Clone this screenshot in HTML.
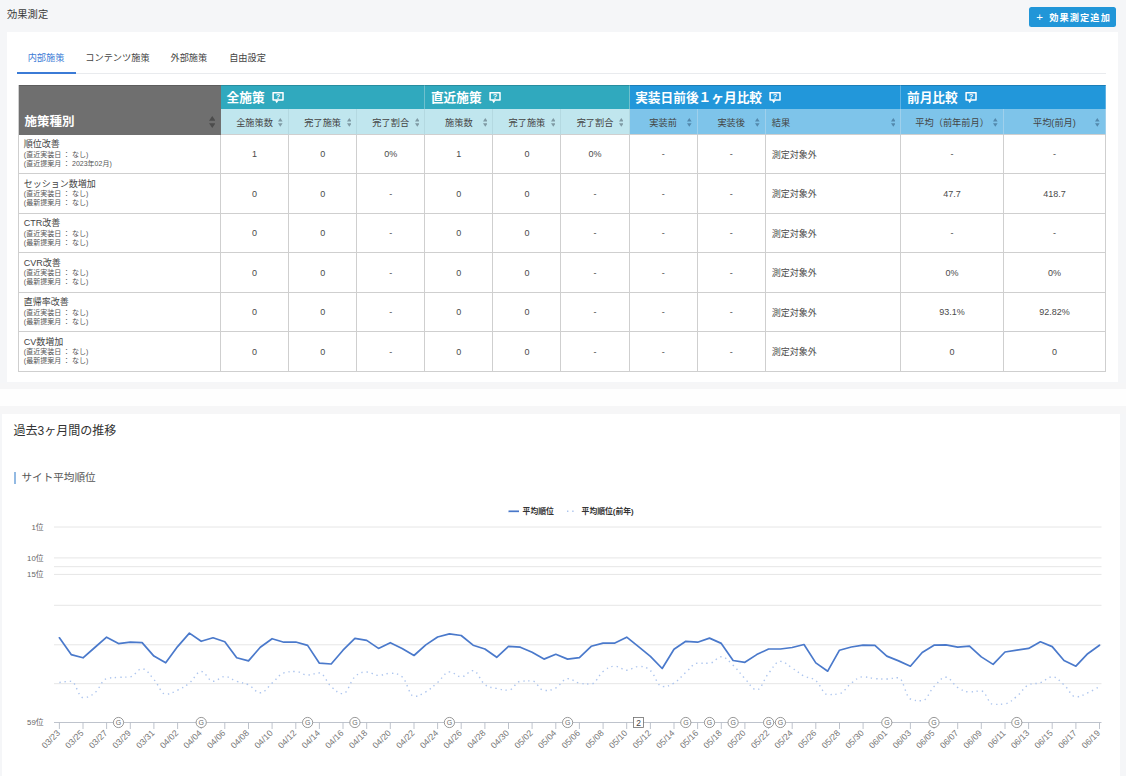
<!DOCTYPE html>
<html lang="ja"><head><meta charset="utf-8"><title>効果測定</title>
<style>
html,body{margin:0;padding:0}
body{width:1126px;height:776px;overflow:hidden;position:relative;background:#f5f6f8;font-family:"Liberation Sans","Noto Sans CJK JP",sans-serif;color:#444;font-size:9.2px}
.abs{position:absolute}
.title{left:7px;top:7.5px;font-size:10.3px;color:#3a3a3a;line-height:14px}
.btn{left:1029px;top:7px;width:87px;height:19.5px;background:#2196d8;border-radius:2.5px;color:#fff;font-size:9.2px;font-weight:700;line-height:20.2px;letter-spacing:1.1px;text-align:left;box-sizing:border-box;padding-left:7.3px;white-space:nowrap;overflow:hidden}
.btn .plus{font-size:11.5px;letter-spacing:0;margin-right:6.2px;font-weight:normal;vertical-align:0.2px}
.card1{left:6.6px;top:31.8px;width:1111.4px;height:350.6px;background:#fff}
.band1{left:0;top:382.5px;width:1126px;height:6.5px;background:#f6f6f7}
.band2{left:0;top:389px;width:1126px;height:16.5px;background:#fefefe}
.band3{left:0;top:405.5px;width:1126px;height:8.5px;background:#f6f6f7}
.card2{left:2.4px;top:413.6px;width:1117.4px;height:362px;background:#fff}
.tabs{left:16.5px;top:42px;width:1089px;height:30.5px;border-bottom:1px solid #e9ebee}
.tab{position:absolute;top:0;height:30.5px;line-height:33px;font-size:9.2px;color:#444;white-space:nowrap}
.tab.on{color:#3b7bd6;border-bottom:2px solid #3b7bd6;height:29.5px}
table{position:absolute;left:17.5px;top:84.6px;border-collapse:separate;border-spacing:0;table-layout:fixed;width:1088.5px;border-left:1px solid #cfcfcf}
td,th{box-sizing:border-box;border-right:1px solid #cfcfcf;border-bottom:1px solid #cfcfcf;padding:0;text-align:center;font-weight:normal;position:relative;font-size:9px;color:#4a4a4a;overflow:hidden}
th.g{background:#6f6f6f;color:#fff;font-size:12.5px;line-height:15px;font-weight:bold;text-align:left;vertical-align:bottom;padding:0 0 3.6px 6px;border-color:#6f6f6f}
th.h1,th.h2{height:24.2px;color:#fff;font-size:12.7px;font-weight:bold;text-align:left;padding:2.6px 0 0 5.6px;line-height:20.6px;border-bottom:0}
th.h1,th.h2,th.g{border-top:1px solid rgba(0,0,0,.16)}
th.h1{background:#30a9be;border-right-color:#6fc0ce}
th.h2{background:#2297da;border-right-color:#5fb2e3}
th.s1,th.s2{height:26.1px;color:#444;font-size:9.2px;line-height:18.3px;padding-top:4.6px}
th.s1{background:#c0e6ee;border-right-color:#b4d9e1}
th.s2{background:#7ec4ea;border-right-color:#9fd0ec}
th.l,td.l{text-align:left;padding-left:6px}
tbody td{height:39.5px}
td.n{text-align:left;padding:0 0 0.4px 5.3px;vertical-align:middle}
.nm{font-size:9px;line-height:11.3px;color:#444}
.sm{font-size:7px;line-height:8.9px;color:#555;white-space:nowrap}
.help{display:inline-block;vertical-align:-1.7px;margin-left:7.3px}
.sort{position:absolute;right:5.1px;top:9.6px;fill:#7f9aa4;width:4.6px;height:8.8px}
th.g .sort{top:auto;bottom:5.4px;right:5px;fill:#4c4c4c;width:6.5px;height:12px}
th.s2 .sort{fill:#5389ad}
.h2t{left:13.5px;top:421.5px;font-size:12px;line-height:18px;color:#333}
.h3t{left:13.5px;top:472px;height:11.5px;border-left:2.3px solid #93bae3;padding-left:6px;font-size:10.6px;line-height:11.5px;color:#555}
.chart{position:absolute;left:0;top:0}
</style></head><body>
<div class="abs title">効果測定</div>
<div class="abs btn"><span class="plus">+</span>効果測定追加</div>
<div class="abs card1"></div>
<div class="abs band1"></div><div class="abs band2"></div><div class="abs band3"></div>
<div class="abs card2"></div>
<div class="abs tabs">
<div class="tab on" style="left:0;width:59px;text-align:center">内部施策</div>
<div class="tab" style="left:68.8px">コンテンツ施策</div>
<div class="tab" style="left:154px">外部施策</div>
<div class="tab" style="left:212.7px">自由設定</div>
</div>
<table>
<colgroup><col style="width:202.5px"><col style="width:68.1px"><col style="width:68.1px"><col style="width:68.1px"><col style="width:68.1px"><col style="width:68.1px"><col style="width:68.1px"><col style="width:68.1px"><col style="width:68.1px"><col style="width:135.6px"><col style="width:102.5px"><col style="width:102.1px"></colgroup>
<thead>
<tr><th class="g" rowspan="2">施策種別<svg class="sort" viewBox="0 0 5 9" preserveAspectRatio="none"><path d="M2.5 0L5 3.6H0z M2.5 9L5 5.400H0z"/></svg></th><th class="h1" colspan="3">全施策<svg class="help" width="12" height="12" viewBox="0 0 12 12"><path d="M1.1 0.7H11V7.9H1.1z" fill="none" stroke="#fff" stroke-width="1.5" stroke-linejoin="round"/><path d="M2.9 8.3H6.600L4.700 11.300z" fill="#fff"/><text x="6.05" y="6.750" font-family="'Liberation Sans', sans-serif" font-size="7.400" font-weight="bold" fill="#fff" text-anchor="middle">?</text></svg></th><th class="h1" colspan="3">直近施策<svg class="help" width="12" height="12" viewBox="0 0 12 12"><path d="M1.1 0.7H11V7.9H1.1z" fill="none" stroke="#fff" stroke-width="1.5" stroke-linejoin="round"/><path d="M2.9 8.3H6.600L4.700 11.300z" fill="#fff"/><text x="6.05" y="6.750" font-family="'Liberation Sans', sans-serif" font-size="7.400" font-weight="bold" fill="#fff" text-anchor="middle">?</text></svg></th><th class="h2" colspan="3">実装日前後１ヶ月比較<svg class="help" width="12" height="12" viewBox="0 0 12 12"><path d="M1.1 0.7H11V7.9H1.1z" fill="none" stroke="#fff" stroke-width="1.5" stroke-linejoin="round"/><path d="M2.9 8.3H6.600L4.700 11.300z" fill="#fff"/><text x="6.05" y="6.750" font-family="'Liberation Sans', sans-serif" font-size="7.400" font-weight="bold" fill="#fff" text-anchor="middle">?</text></svg></th><th class="h2" colspan="2">前月比較<svg class="help" width="12" height="12" viewBox="0 0 12 12"><path d="M1.1 0.7H11V7.9H1.1z" fill="none" stroke="#fff" stroke-width="1.5" stroke-linejoin="round"/><path d="M2.9 8.3H6.600L4.700 11.300z" fill="#fff"/><text x="6.05" y="6.750" font-family="'Liberation Sans', sans-serif" font-size="7.400" font-weight="bold" fill="#fff" text-anchor="middle">?</text></svg></th></tr>
<tr><th class="s1">全施策数<svg class="sort" viewBox="0 0 5 9" preserveAspectRatio="none"><path d="M2.5 0L5 3.6H0z M2.5 9L5 5.400H0z"/></svg></th><th class="s1">完了施策<svg class="sort" viewBox="0 0 5 9" preserveAspectRatio="none"><path d="M2.5 0L5 3.6H0z M2.5 9L5 5.400H0z"/></svg></th><th class="s1">完了割合<svg class="sort" viewBox="0 0 5 9" preserveAspectRatio="none"><path d="M2.5 0L5 3.6H0z M2.5 9L5 5.400H0z"/></svg></th><th class="s1">施策数<svg class="sort" viewBox="0 0 5 9" preserveAspectRatio="none"><path d="M2.5 0L5 3.6H0z M2.5 9L5 5.400H0z"/></svg></th><th class="s1">完了施策<svg class="sort" viewBox="0 0 5 9" preserveAspectRatio="none"><path d="M2.5 0L5 3.6H0z M2.5 9L5 5.400H0z"/></svg></th><th class="s1">完了割合<svg class="sort" viewBox="0 0 5 9" preserveAspectRatio="none"><path d="M2.5 0L5 3.6H0z M2.5 9L5 5.400H0z"/></svg></th><th class="s2">実装前<svg class="sort" viewBox="0 0 5 9" preserveAspectRatio="none"><path d="M2.5 0L5 3.6H0z M2.5 9L5 5.400H0z"/></svg></th><th class="s2">実装後<svg class="sort" viewBox="0 0 5 9" preserveAspectRatio="none"><path d="M2.5 0L5 3.6H0z M2.5 9L5 5.400H0z"/></svg></th><th class="s2 l">結果<svg class="sort" viewBox="0 0 5 9" preserveAspectRatio="none"><path d="M2.5 0L5 3.6H0z M2.5 9L5 5.400H0z"/></svg></th><th class="s2">平均（前年前月）<svg class="sort" viewBox="0 0 5 9" preserveAspectRatio="none"><path d="M2.5 0L5 3.6H0z M2.5 9L5 5.400H0z"/></svg></th><th class="s2">平均(前月)<svg class="sort" viewBox="0 0 5 9" preserveAspectRatio="none"><path d="M2.5 0L5 3.6H0z M2.5 9L5 5.400H0z"/></svg></th></tr>
</thead>
<tbody>
<tr><td class="n"><div class="nm">順位改善</div><div class="sm">(直近実装日 ： なし)</div><div class="sm">(直近提案月 ： 2023年02月)</div></td><td>1</td><td>0</td><td>0%</td><td>1</td><td>0</td><td>0%</td><td>-</td><td>-</td><td class="l">測定対象外</td><td>-</td><td>-</td></tr>
<tr><td class="n"><div class="nm">セッション数増加</div><div class="sm">(直近実装日 ： なし)</div><div class="sm">(最新提案月 ： なし)</div></td><td>0</td><td>0</td><td>-</td><td>0</td><td>0</td><td>-</td><td>-</td><td>-</td><td class="l">測定対象外</td><td>47.7</td><td>418.7</td></tr>
<tr><td class="n"><div class="nm">CTR改善</div><div class="sm">(直近実装日 ： なし)</div><div class="sm">(最新提案月 ： なし)</div></td><td>0</td><td>0</td><td>-</td><td>0</td><td>0</td><td>-</td><td>-</td><td>-</td><td class="l">測定対象外</td><td>-</td><td>-</td></tr>
<tr><td class="n"><div class="nm">CVR改善</div><div class="sm">(直近実装日 ： なし)</div><div class="sm">(最新提案月 ： なし)</div></td><td>0</td><td>0</td><td>-</td><td>0</td><td>0</td><td>-</td><td>-</td><td>-</td><td class="l">測定対象外</td><td>0%</td><td>0%</td></tr>
<tr><td class="n"><div class="nm">直帰率改善</div><div class="sm">(直近実装日 ： なし)</div><div class="sm">(最新提案月 ： なし)</div></td><td>0</td><td>0</td><td>-</td><td>0</td><td>0</td><td>-</td><td>-</td><td>-</td><td class="l">測定対象外</td><td>93.1%</td><td>92.82%</td></tr>
<tr><td class="n"><div class="nm">CV数増加</div><div class="sm">(直近実装日 ： なし)</div><div class="sm">(最新提案月 ： なし)</div></td><td>0</td><td>0</td><td>-</td><td>0</td><td>0</td><td>-</td><td>-</td><td>-</td><td class="l">測定対象外</td><td>0</td><td>0</td></tr>
</tbody></table>
<div class="abs h2t">過去3ヶ月間の推移</div>
<div class="abs h3t">サイト平均順位</div>
<svg class="chart" width="1126" height="776" viewBox="0 0 1126 776">
<line x1="54" x2="1101.5" y1="527.0" y2="527.0" stroke="#e6e6e6" stroke-width="1"/>
<line x1="54" x2="1101.5" y1="557.9" y2="557.9" stroke="#e6e6e6" stroke-width="1"/>
<line x1="54" x2="1101.5" y1="566.7" y2="566.7" stroke="#e6e6e6" stroke-width="1"/>
<line x1="54" x2="1101.5" y1="574.4" y2="574.4" stroke="#e6e6e6" stroke-width="1"/>
<line x1="54" x2="1101.5" y1="605.3" y2="605.3" stroke="#e6e6e6" stroke-width="1"/>
<line x1="54" x2="1101.5" y1="644.8" y2="644.8" stroke="#e6e6e6" stroke-width="1"/>
<line x1="54" x2="1101.5" y1="683.7" y2="683.7" stroke="#e6e6e6" stroke-width="1"/>
<line x1="54" x2="1101.5" y1="722.5" y2="722.5" stroke="#b7bcc6" stroke-width="0.9"/>
<line x1="59.4" x2="59.4" y1="722.5" y2="729.0" stroke="#b7bcc6" stroke-width="0.9"/>
<line x1="83.0" x2="83.0" y1="722.5" y2="729.0" stroke="#b7bcc6" stroke-width="0.9"/>
<line x1="106.6" x2="106.6" y1="722.5" y2="729.0" stroke="#b7bcc6" stroke-width="0.9"/>
<line x1="130.3" x2="130.3" y1="722.5" y2="729.0" stroke="#b7bcc6" stroke-width="0.9"/>
<line x1="153.9" x2="153.9" y1="722.5" y2="729.0" stroke="#b7bcc6" stroke-width="0.9"/>
<line x1="177.6" x2="177.6" y1="722.5" y2="729.0" stroke="#b7bcc6" stroke-width="0.9"/>
<line x1="201.2" x2="201.2" y1="722.5" y2="729.0" stroke="#b7bcc6" stroke-width="0.9"/>
<line x1="224.8" x2="224.8" y1="722.5" y2="729.0" stroke="#b7bcc6" stroke-width="0.9"/>
<line x1="248.5" x2="248.5" y1="722.5" y2="729.0" stroke="#b7bcc6" stroke-width="0.9"/>
<line x1="272.1" x2="272.1" y1="722.5" y2="729.0" stroke="#b7bcc6" stroke-width="0.9"/>
<line x1="295.8" x2="295.8" y1="722.5" y2="729.0" stroke="#b7bcc6" stroke-width="0.9"/>
<line x1="319.4" x2="319.4" y1="722.5" y2="729.0" stroke="#b7bcc6" stroke-width="0.9"/>
<line x1="343.0" x2="343.0" y1="722.5" y2="729.0" stroke="#b7bcc6" stroke-width="0.9"/>
<line x1="366.7" x2="366.7" y1="722.5" y2="729.0" stroke="#b7bcc6" stroke-width="0.9"/>
<line x1="390.3" x2="390.3" y1="722.5" y2="729.0" stroke="#b7bcc6" stroke-width="0.9"/>
<line x1="414.0" x2="414.0" y1="722.5" y2="729.0" stroke="#b7bcc6" stroke-width="0.9"/>
<line x1="437.6" x2="437.6" y1="722.5" y2="729.0" stroke="#b7bcc6" stroke-width="0.9"/>
<line x1="461.2" x2="461.2" y1="722.5" y2="729.0" stroke="#b7bcc6" stroke-width="0.9"/>
<line x1="484.9" x2="484.9" y1="722.5" y2="729.0" stroke="#b7bcc6" stroke-width="0.9"/>
<line x1="508.5" x2="508.5" y1="722.5" y2="729.0" stroke="#b7bcc6" stroke-width="0.9"/>
<line x1="532.1" x2="532.1" y1="722.5" y2="729.0" stroke="#b7bcc6" stroke-width="0.9"/>
<line x1="555.8" x2="555.8" y1="722.5" y2="729.0" stroke="#b7bcc6" stroke-width="0.9"/>
<line x1="579.4" x2="579.4" y1="722.5" y2="729.0" stroke="#b7bcc6" stroke-width="0.9"/>
<line x1="603.1" x2="603.1" y1="722.5" y2="729.0" stroke="#b7bcc6" stroke-width="0.9"/>
<line x1="626.7" x2="626.7" y1="722.5" y2="729.0" stroke="#b7bcc6" stroke-width="0.9"/>
<line x1="650.4" x2="650.4" y1="722.5" y2="729.0" stroke="#b7bcc6" stroke-width="0.9"/>
<line x1="674.0" x2="674.0" y1="722.5" y2="729.0" stroke="#b7bcc6" stroke-width="0.9"/>
<line x1="697.6" x2="697.6" y1="722.5" y2="729.0" stroke="#b7bcc6" stroke-width="0.9"/>
<line x1="721.3" x2="721.3" y1="722.5" y2="729.0" stroke="#b7bcc6" stroke-width="0.9"/>
<line x1="744.9" x2="744.9" y1="722.5" y2="729.0" stroke="#b7bcc6" stroke-width="0.9"/>
<line x1="768.6" x2="768.6" y1="722.5" y2="729.0" stroke="#b7bcc6" stroke-width="0.9"/>
<line x1="792.2" x2="792.2" y1="722.5" y2="729.0" stroke="#b7bcc6" stroke-width="0.9"/>
<line x1="815.8" x2="815.8" y1="722.5" y2="729.0" stroke="#b7bcc6" stroke-width="0.9"/>
<line x1="839.5" x2="839.5" y1="722.5" y2="729.0" stroke="#b7bcc6" stroke-width="0.9"/>
<line x1="863.1" x2="863.1" y1="722.5" y2="729.0" stroke="#b7bcc6" stroke-width="0.9"/>
<line x1="886.8" x2="886.8" y1="722.5" y2="729.0" stroke="#b7bcc6" stroke-width="0.9"/>
<line x1="910.4" x2="910.4" y1="722.5" y2="729.0" stroke="#b7bcc6" stroke-width="0.9"/>
<line x1="934.0" x2="934.0" y1="722.5" y2="729.0" stroke="#b7bcc6" stroke-width="0.9"/>
<line x1="957.7" x2="957.7" y1="722.5" y2="729.0" stroke="#b7bcc6" stroke-width="0.9"/>
<line x1="981.3" x2="981.3" y1="722.5" y2="729.0" stroke="#b7bcc6" stroke-width="0.9"/>
<line x1="1005.0" x2="1005.0" y1="722.5" y2="729.0" stroke="#b7bcc6" stroke-width="0.9"/>
<line x1="1028.6" x2="1028.6" y1="722.5" y2="729.0" stroke="#b7bcc6" stroke-width="0.9"/>
<line x1="1052.2" x2="1052.2" y1="722.5" y2="729.0" stroke="#b7bcc6" stroke-width="0.9"/>
<line x1="1075.9" x2="1075.9" y1="722.5" y2="729.0" stroke="#b7bcc6" stroke-width="0.9"/>
<line x1="1099.5" x2="1099.5" y1="722.5" y2="729.0" stroke="#b7bcc6" stroke-width="0.9"/>
<path d="M59.4 682.5 C59.4 682.5 66.4 681.3 71.2 681.3 C75.9 681.3 78.3 697.6 83.0 697.6 C87.7 697.6 90.1 696.6 94.8 692.8 C99.5 689.0 101.9 679.8 106.6 678.6 C111.4 677.4 113.7 677.8 118.5 677.4 C123.2 677.0 125.5 677.4 130.3 676.8 C135.0 676.2 137.4 668.8 142.1 668.8 C146.8 668.8 149.2 674.4 153.9 679.5 C158.6 684.6 161.0 694.2 165.7 694.2 C170.5 694.2 172.8 692.4 177.6 690.2 C182.3 688.0 184.6 686.8 189.4 683.1 C194.1 679.4 196.5 671.5 201.2 671.5 C205.9 671.5 208.3 681.3 213.0 681.3 C217.7 681.3 220.1 676.5 224.8 676.5 C229.6 676.5 231.9 679.6 236.7 681.3 C241.4 683.0 243.7 682.5 248.5 684.8 C253.2 687.1 255.6 692.8 260.3 692.8 C265.0 692.8 267.4 687.1 272.1 683.1 C276.8 679.1 279.2 674.3 283.9 672.9 C288.7 671.5 291.0 671.5 295.8 671.5 C300.5 671.5 302.8 675.1 307.6 675.1 C312.3 675.1 314.7 672.9 319.4 672.9 C324.1 672.9 326.5 682.4 331.2 686.6 C335.9 690.8 338.3 693.7 343.0 693.7 C347.8 693.7 350.1 681.1 354.9 676.8 C359.6 672.5 361.9 672.0 366.7 672.0 C371.4 672.0 373.8 675.4 378.5 675.4 C383.2 675.4 385.6 673.3 390.3 673.3 C395.0 673.3 397.4 673.3 402.1 676.8 C406.9 680.3 409.2 696.4 414.0 696.4 C418.7 696.4 421.0 694.7 425.8 691.9 C430.5 689.1 432.9 686.5 437.6 682.5 C442.3 678.5 444.7 671.9 449.4 671.9 C454.1 671.9 456.5 676.8 461.2 676.8 C466.0 676.8 468.3 670.6 473.1 670.6 C477.8 670.6 480.1 680.9 484.9 684.5 C489.6 688.1 492.0 687.3 496.7 688.4 C501.4 689.5 503.8 690.2 508.5 690.2 C513.2 690.2 515.6 681.7 520.3 681.3 C525.1 680.9 527.4 680.9 532.1 680.9 C536.9 680.9 539.2 690.5 544.0 690.5 C548.7 690.5 551.1 690.4 555.8 688.0 C560.5 685.6 562.9 678.6 567.6 678.6 C572.3 678.6 574.7 682.2 579.4 683.1 C584.2 684.0 586.5 684.0 591.2 684.0 C596.0 684.0 598.3 675.1 603.1 671.5 C607.8 667.9 610.2 666.2 614.9 666.2 C619.6 666.2 622.0 670.2 626.7 670.2 C631.4 670.2 633.8 666.5 638.5 666.5 C643.3 666.5 645.6 666.6 650.4 670.6 C655.1 674.6 657.4 686.6 662.2 686.6 C666.9 686.6 669.3 685.9 674.0 683.1 C678.7 680.3 681.1 676.4 685.8 672.4 C690.5 668.4 692.9 663.2 697.6 663.2 C702.4 663.2 704.7 663.2 709.5 663.2 C714.2 663.2 716.5 656.8 721.3 656.8 C726.0 656.8 728.4 660.9 733.1 665.3 C737.8 669.7 740.2 673.7 744.9 678.6 C749.6 683.5 752.0 689.8 756.7 689.8 C761.5 689.8 763.8 679.0 768.6 673.3 C773.3 667.6 775.6 661.4 780.4 661.4 C785.1 661.4 787.5 665.1 792.2 668.0 C796.9 670.9 799.3 673.5 804.0 676.0 C808.7 678.5 811.1 676.9 815.8 680.6 C820.6 684.3 822.9 694.6 827.7 694.6 C832.4 694.6 834.7 694.6 839.5 693.7 C844.2 692.8 846.6 686.5 851.3 683.1 C856.0 679.7 858.4 676.8 863.1 676.8 C867.8 676.8 870.2 678.2 874.9 678.6 C879.7 679.0 882.0 679.0 886.8 679.0 C891.5 679.0 893.8 677.7 898.6 677.7 C903.3 677.7 905.7 697.2 910.4 699.0 C915.1 700.8 917.5 700.8 922.2 700.8 C926.9 700.8 929.3 691.3 934.0 686.6 C938.8 681.9 941.1 677.2 945.9 677.2 C950.6 677.2 952.9 684.6 957.7 687.5 C962.4 690.4 964.8 691.9 969.5 691.9 C974.2 691.9 976.6 691.0 981.3 691.0 C986.0 691.0 988.4 704.4 993.1 704.4 C997.9 704.4 1000.2 704.4 1005.0 703.8 C1009.7 703.2 1012.0 700.2 1016.8 696.4 C1021.5 692.6 1023.9 686.9 1028.6 684.8 C1033.3 682.7 1035.7 684.3 1040.4 682.7 C1045.1 681.1 1047.5 676.8 1052.2 676.8 C1057.0 676.8 1059.3 680.8 1064.0 684.8 C1068.8 688.8 1071.1 696.9 1075.9 696.9 C1080.6 696.9 1083.0 694.9 1087.7 692.8 C1092.4 690.7 1099.5 686.6 1099.5 686.6" fill="none" stroke="#adc5ee" stroke-width="1.4" stroke-dasharray="1.4 3.8" stroke-linejoin="round"/>
<path d="M59.4 637.8 L71.2 654.6 L83.0 657.8 L94.8 647.5 L106.6 637.2 L118.5 643.6 L130.3 642.2 L142.1 642.6 L153.9 656.1 L165.7 662.8 L177.6 646.6 L189.4 633.1 L201.2 641.3 L213.0 637.8 L224.8 641.7 L236.7 657.8 L248.5 660.9 L260.3 647.2 L272.1 638.7 L283.9 642.2 L295.8 642.0 L307.6 645.4 L319.4 663.2 L331.2 664.0 L343.0 650.2 L354.9 638.3 L366.7 640.4 L378.5 648.4 L390.3 642.7 L402.1 648.4 L414.0 655.5 L425.8 644.9 L437.6 637.0 L449.4 633.9 L461.2 635.5 L473.1 645.2 L484.9 649.0 L496.7 657.3 L508.5 646.3 L520.3 647.2 L532.1 652.3 L544.0 659.1 L555.8 654.3 L567.6 659.1 L579.4 657.7 L591.2 646.3 L603.1 643.1 L614.9 643.1 L626.7 637.2 L638.5 646.6 L650.4 656.4 L662.2 668.5 L674.0 649.3 L685.8 641.3 L697.6 642.2 L709.5 638.1 L721.3 643.4 L733.1 660.5 L744.9 662.3 L756.7 654.6 L768.6 649.0 L780.4 649.0 L792.2 647.5 L804.0 644.5 L815.8 662.9 L827.7 671.2 L839.5 650.2 L851.3 647.0 L863.1 645.2 L874.9 645.4 L886.8 656.1 L898.6 660.9 L910.4 666.2 L922.2 652.5 L934.0 645.2 L945.9 644.9 L957.7 647.2 L969.5 646.1 L981.3 656.9 L993.1 664.4 L1005.0 652.0 L1016.8 650.2 L1028.6 648.4 L1040.4 641.8 L1052.2 646.6 L1064.0 660.5 L1075.9 666.2 L1087.7 653.7 L1099.5 645.2" fill="none" stroke="#4a79cb" stroke-width="1.7" stroke-linejoin="round" stroke-linecap="round"/>
<g font-family="'Liberation Sans', sans-serif" font-size="8.7" fill="#757575" text-anchor="end">
<text transform="translate(60.6 733.7) rotate(-45)">03/23</text>
<text transform="translate(84.2 733.7) rotate(-45)">03/25</text>
<text transform="translate(107.8 733.7) rotate(-45)">03/27</text>
<text transform="translate(131.5 733.7) rotate(-45)">03/29</text>
<text transform="translate(155.1 733.7) rotate(-45)">03/31</text>
<text transform="translate(178.8 733.7) rotate(-45)">04/02</text>
<text transform="translate(202.4 733.7) rotate(-45)">04/04</text>
<text transform="translate(226.0 733.7) rotate(-45)">04/06</text>
<text transform="translate(249.7 733.7) rotate(-45)">04/08</text>
<text transform="translate(273.3 733.7) rotate(-45)">04/10</text>
<text transform="translate(296.9 733.7) rotate(-45)">04/12</text>
<text transform="translate(320.6 733.7) rotate(-45)">04/14</text>
<text transform="translate(344.2 733.7) rotate(-45)">04/16</text>
<text transform="translate(367.9 733.7) rotate(-45)">04/18</text>
<text transform="translate(391.5 733.7) rotate(-45)">04/20</text>
<text transform="translate(415.2 733.7) rotate(-45)">04/22</text>
<text transform="translate(438.8 733.7) rotate(-45)">04/24</text>
<text transform="translate(462.4 733.7) rotate(-45)">04/26</text>
<text transform="translate(486.1 733.7) rotate(-45)">04/28</text>
<text transform="translate(509.7 733.7) rotate(-45)">04/30</text>
<text transform="translate(533.4 733.7) rotate(-45)">05/02</text>
<text transform="translate(557.0 733.7) rotate(-45)">05/04</text>
<text transform="translate(580.6 733.7) rotate(-45)">05/06</text>
<text transform="translate(604.3 733.7) rotate(-45)">05/08</text>
<text transform="translate(627.9 733.7) rotate(-45)">05/10</text>
<text transform="translate(651.6 733.7) rotate(-45)">05/12</text>
<text transform="translate(675.2 733.7) rotate(-45)">05/14</text>
<text transform="translate(698.8 733.7) rotate(-45)">05/16</text>
<text transform="translate(722.5 733.7) rotate(-45)">05/18</text>
<text transform="translate(746.1 733.7) rotate(-45)">05/20</text>
<text transform="translate(769.8 733.7) rotate(-45)">05/22</text>
<text transform="translate(793.4 733.7) rotate(-45)">05/24</text>
<text transform="translate(817.0 733.7) rotate(-45)">05/26</text>
<text transform="translate(840.7 733.7) rotate(-45)">05/28</text>
<text transform="translate(864.3 733.7) rotate(-45)">05/30</text>
<text transform="translate(888.0 733.7) rotate(-45)">06/01</text>
<text transform="translate(911.6 733.7) rotate(-45)">06/03</text>
<text transform="translate(935.2 733.7) rotate(-45)">06/05</text>
<text transform="translate(958.9 733.7) rotate(-45)">06/07</text>
<text transform="translate(982.5 733.7) rotate(-45)">06/09</text>
<text transform="translate(1006.2 733.7) rotate(-45)">06/11</text>
<text transform="translate(1029.8 733.7) rotate(-45)">06/13</text>
<text transform="translate(1053.4 733.7) rotate(-45)">06/15</text>
<text transform="translate(1077.1 733.7) rotate(-45)">06/17</text>
<text transform="translate(1100.7 733.7) rotate(-45)">06/19</text>
</g>
<g font-family="'Liberation Sans', 'Noto Sans CJK JP', sans-serif" font-size="7.8" fill="#666" text-anchor="end">
<text x="43.6" y="529.8">1位</text>
<text x="43.6" y="560.7">10位</text>
<text x="43.6" y="577.2">15位</text>
<text x="43.6" y="725.3">59位</text>
</g>
<g font-family="'Liberation Sans', sans-serif" font-size="7" fill="#6c6c6c" text-anchor="middle">
<circle cx="118.5" cy="722.5" r="5.1" fill="#fff" stroke="#8c8c8c" stroke-width="0.9"/>
<text x="118.5" y="725.0">G</text>
<circle cx="201.2" cy="722.5" r="5.1" fill="#fff" stroke="#8c8c8c" stroke-width="0.9"/>
<text x="201.3" y="725.0">G</text>
<circle cx="307.6" cy="722.5" r="5.1" fill="#fff" stroke="#8c8c8c" stroke-width="0.9"/>
<text x="307.7" y="725.0">G</text>
<circle cx="354.9" cy="722.5" r="5.1" fill="#fff" stroke="#8c8c8c" stroke-width="0.9"/>
<text x="355.0" y="725.0">G</text>
<circle cx="449.4" cy="722.5" r="5.1" fill="#fff" stroke="#8c8c8c" stroke-width="0.9"/>
<text x="449.5" y="725.0">G</text>
<circle cx="567.6" cy="722.5" r="5.1" fill="#fff" stroke="#8c8c8c" stroke-width="0.9"/>
<text x="567.7" y="725.0">G</text>
<circle cx="685.8" cy="722.5" r="5.1" fill="#fff" stroke="#8c8c8c" stroke-width="0.9"/>
<text x="685.9" y="725.0">G</text>
<circle cx="709.5" cy="722.5" r="5.1" fill="#fff" stroke="#8c8c8c" stroke-width="0.9"/>
<text x="709.6" y="725.0">G</text>
<circle cx="733.1" cy="722.5" r="5.1" fill="#fff" stroke="#8c8c8c" stroke-width="0.9"/>
<text x="733.2" y="725.0">G</text>
<circle cx="768.6" cy="722.5" r="5.1" fill="#fff" stroke="#8c8c8c" stroke-width="0.9"/>
<text x="768.7" y="725.0">G</text>
<circle cx="780.4" cy="722.5" r="5.1" fill="#fff" stroke="#8c8c8c" stroke-width="0.9"/>
<text x="780.5" y="725.0">G</text>
<circle cx="886.8" cy="722.5" r="5.1" fill="#fff" stroke="#8c8c8c" stroke-width="0.9"/>
<text x="886.9" y="725.0">G</text>
<circle cx="934.0" cy="722.5" r="5.1" fill="#fff" stroke="#8c8c8c" stroke-width="0.9"/>
<text x="934.1" y="725.0">G</text>
<circle cx="1016.8" cy="722.5" r="5.1" fill="#fff" stroke="#8c8c8c" stroke-width="0.9"/>
<text x="1016.9" y="725.0">G</text>
<rect x="633.5" y="717.5" width="10" height="10" fill="#fff" stroke="#6f6f6f" stroke-width="0.8"/>
<text x="638.5" y="725.5" font-size="8.5" fill="#444">2</text>
</g>
<line x1="508.5" x2="519" y1="511.3" y2="511.3" stroke="#4877c9" stroke-width="1.7"/>
<line x1="567" x2="576" y1="511.3" y2="511.3" stroke="#adc5ee" stroke-width="1.4" stroke-dasharray="1.4 3.8"/>
<g font-family="'Liberation Sans', 'Noto Sans CJK JP', sans-serif" font-size="7.8" font-weight="bold" fill="#333">
<text x="522.6" y="514.2">平均順位</text>
<text x="581.6" y="514.2">平均順位(前年)</text>
</g>
</svg>
</body></html>
